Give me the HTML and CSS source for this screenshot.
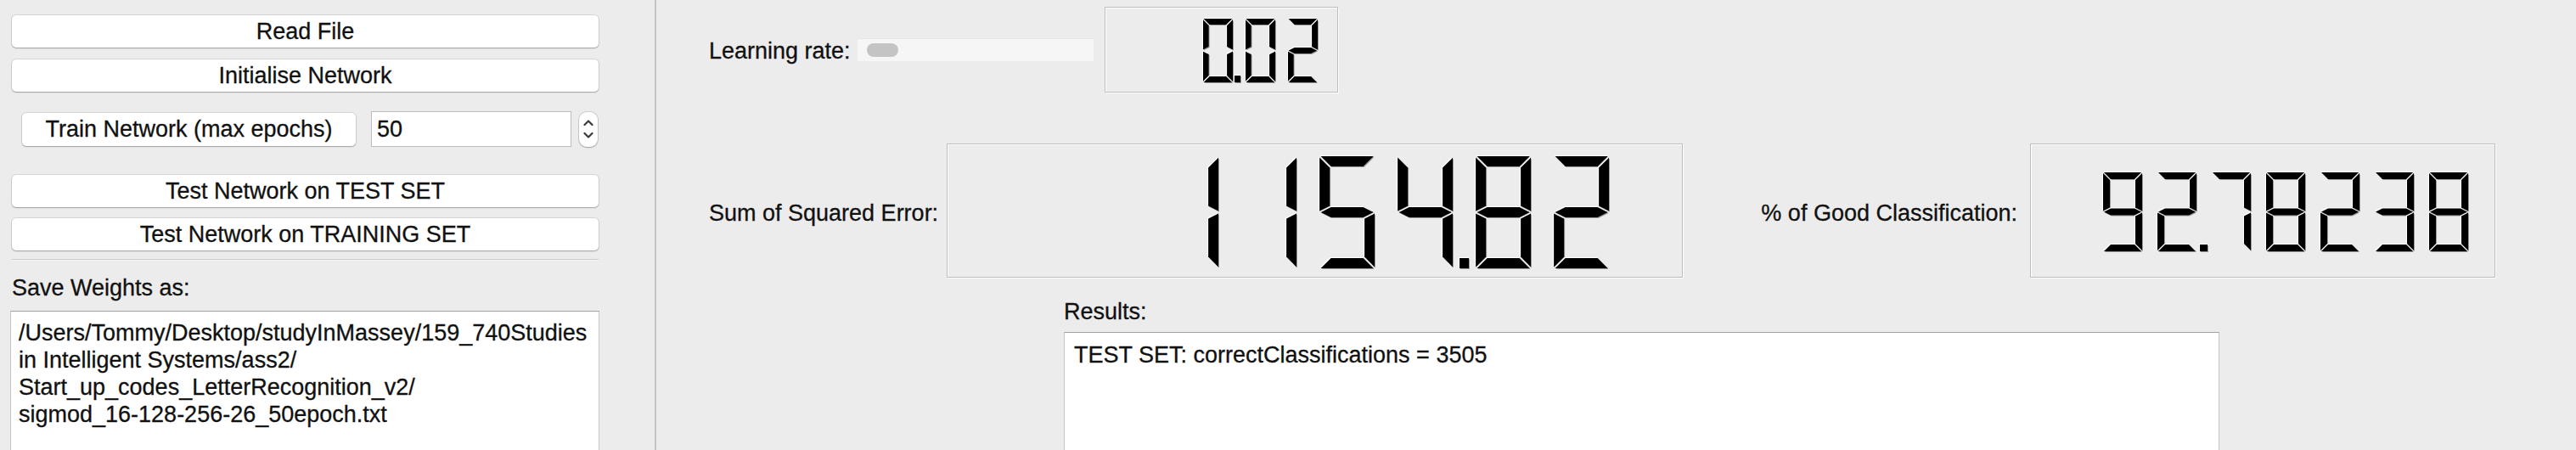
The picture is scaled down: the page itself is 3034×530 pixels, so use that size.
FILE: index.html
```html
<!DOCTYPE html>
<html>
<head>
<meta charset="utf-8">
<title>Neural Network Trainer</title>
<link rel="stylesheet" href="styles.css">
</head>
<body>
<div class="window">
  <aside class="left">
    <button class="btn">Read File</button>
    <button class="btn btn-init">Initialise Network</button>
    <div class="train-row">
      <button class="btn btn-train">Train Network (max epochs)</button>
      <div class="spin-field">50</div>
      <div class="spin-arrows">
        <svg width="12" height="26" viewBox="0 0 12 26"><path d="M1.5 8 L6 3.5 L10.5 8 M1.5 18 L6 22.5 L10.5 18" fill="none" stroke="#3a3a3a" stroke-width="2.2" stroke-linecap="round" stroke-linejoin="round"/></svg>
      </div>
    </div>
    <button class="btn btn-test1">Test Network on TEST SET</button>
    <button class="btn btn-test2">Test Network on TRAINING SET</button>
    <div class="sep"></div>
    <div class="label save-label">Save Weights as:</div>
    <div class="textbox save-box">/Users/Tommy/Desktop/studyInMassey/159_740Studies<br>in Intelligent Systems/ass2/<br>Start_up_codes_LetterRecognition_v2/<br>sigmod_16-128-256-26_50epoch.txt</div>
  </aside>
  <div class="divider"></div>
  <main class="right">
    <div class="row row-lr">
      <span class="label label-lr">Learning rate:</span>
      <div class="slider"><span class="handle"></span></div>
      <div class="lcd lcd-lr">
        <span class="digit"><span class="ch">0</span><i class="s a"></i><i class="s b"></i><i class="s c"></i><i class="s d"></i><i class="s e"></i><i class="s f"></i></span>
        <span class="dot"><span class="ch">.</span></span>
        <span class="digit"><span class="ch">0</span><i class="s a"></i><i class="s b"></i><i class="s c"></i><i class="s d"></i><i class="s e"></i><i class="s f"></i></span>
        <span class="digit"><span class="ch">2</span><i class="s a"></i><i class="s b"></i><i class="s g"></i><i class="s e"></i><i class="s d"></i></span>
      </div>
    </div>

    <div class="row row-err">
      <span class="label label-mid">Sum of Squared Error:</span>
      <div class="lcd lcd-sse">
        <span class="digit"><span class="ch">1</span><i class="s b"></i><i class="s c"></i></span>
        <span class="digit"><span class="ch">1</span><i class="s b"></i><i class="s c"></i></span>
        <span class="digit"><span class="ch">5</span><i class="s a"></i><i class="s f"></i><i class="s g"></i><i class="s c"></i><i class="s d"></i></span>
        <span class="digit"><span class="ch">4</span><i class="s f"></i><i class="s g"></i><i class="s b"></i><i class="s c"></i></span>
        <span class="dot"><span class="ch">.</span></span>
        <span class="digit"><span class="ch">8</span><i class="s a"></i><i class="s b"></i><i class="s c"></i><i class="s d"></i><i class="s e"></i><i class="s f"></i><i class="s g"></i></span>
        <span class="digit"><span class="ch">2</span><i class="s a"></i><i class="s b"></i><i class="s g"></i><i class="s e"></i><i class="s d"></i></span>
      </div>
      <span class="spacer"></span>
      <span class="label label-mid">% of Good Classification:</span>
      <div class="lcd lcd-pct">
        <span class="digit"><span class="ch">9</span><i class="s a"></i><i class="s b"></i><i class="s c"></i><i class="s d"></i><i class="s f"></i><i class="s g"></i></span>
        <span class="digit"><span class="ch">2</span><i class="s a"></i><i class="s b"></i><i class="s g"></i><i class="s e"></i><i class="s d"></i></span>
        <span class="dot"><span class="ch">.</span></span>
        <span class="digit"><span class="ch">7</span><i class="s a"></i><i class="s b"></i><i class="s c"></i></span>
        <span class="digit"><span class="ch">8</span><i class="s a"></i><i class="s b"></i><i class="s c"></i><i class="s d"></i><i class="s e"></i><i class="s f"></i><i class="s g"></i></span>
        <span class="digit"><span class="ch">2</span><i class="s a"></i><i class="s b"></i><i class="s g"></i><i class="s e"></i><i class="s d"></i></span>
        <span class="digit"><span class="ch">3</span><i class="s a"></i><i class="s b"></i><i class="s g"></i><i class="s c"></i><i class="s d"></i></span>
        <span class="digit"><span class="ch">8</span><i class="s a"></i><i class="s b"></i><i class="s c"></i><i class="s d"></i><i class="s e"></i><i class="s f"></i><i class="s g"></i></span>
      </div>
    </div>

    <div class="results">
      <div class="label">Results:</div>
      <div class="textbox results-box">TEST SET: correctClassifications = 3505</div>
    </div>
  </main>
</div>
</body>
</html>
```

FILE: styles.css
```css
* {
  box-sizing: border-box;
  margin: 0;
  padding: 0;
}

html,
body {
  width: 3034px;
  height: 530px;
  overflow: hidden;
}

body {
  background: #ececec;
  font-family: "Liberation Sans", Arial, sans-serif;
  font-size: 27px;
  color: #111;
  -webkit-text-stroke: 0.3px #111;
}

.window {
  display: flex;
  height: 530px;
}

/* ---------- left panel ---------- */
.left {
  width: 771px;
  flex: none;
  padding: 18px 0 0 14px;
  display: flex;
  flex-direction: column;
  align-items: flex-start;
}

.left > * {
  flex: none;
}

.btn {
  font: inherit;
  color: inherit;
  background: #fff;
  border: none;
  border-radius: 5px;
  height: 38px;
  width: 691px;
  line-height: 1;
  display: flex;
  align-items: center;
  justify-content: center;
  box-shadow: 0 0 0 1px rgba(0, 0, 0, 0.09), 0 1px 1.5px rgba(0, 0, 0, 0.25);
}

.btn-init {
  margin-top: 14px;
}

.train-row {
  margin-top: 23px;
  height: 42px;
  padding-left: 12px;
  display: flex;
  align-items: center;
}

.train-row > * {
  flex: none;
}

.btn-train {
  width: 393px;
  height: 39px;
}

.spin-field {
  width: 236px;
  height: 42px;
  margin-left: 18px;
  background: #fff;
  border: 1px solid #bdbdbd;
  padding-left: 6px;
  display: flex;
  align-items: center;
}

.spin-arrows {
  width: 22px;
  height: 41px;
  margin-left: 9px;
  background: #fff;
  border-radius: 9px;
  box-shadow: 0 0 0 1px rgba(0, 0, 0, 0.12), 0 1px 1.5px rgba(0, 0, 0, 0.22);
  display: flex;
  align-items: center;
  justify-content: center;
}

.btn-test1 {
  margin-top: 33px;
}

.btn-test2 {
  margin-top: 13px;
}

.sep {
  margin-top: 10px;
  width: 691px;
  height: 2px;
  border-top: 1px solid #c9c9c9;
  border-bottom: 1px solid #f6f6f6;
}

.label {
  line-height: 32px;
  white-space: nowrap;
}

.save-label {
  margin-top: 16px;
}

.textbox {
  background: #fff;
  border: 1px solid #c6c6c6;
  border-top-color: #a2a2a2;
  line-height: 32px;
  white-space: nowrap;
}

.save-box {
  margin-top: 11px;
  margin-left: -2px;
  width: 694px;
  height: 220px;
  padding: 9px 9px;
}

.divider {
  width: 2px;
  flex: none;
  background: #c3c3c3;
}

/* ---------- right panel ---------- */
.right {
  flex: 1;
  padding: 8px 0 0 62px;
  display: flex;
  flex-direction: column;
  align-items: flex-start;
}

.right > * {
  flex: none;
}

.row {
  display: flex;
  align-items: center;
}

.row > * {
  flex: none;
}

.label-lr {
  margin-top: 3px;
}

.label-mid {
  margin-top: 5px;
}

.slider {
  width: 278px;
  height: 27px;
  margin-left: 8px;
  background: #f6f6f6;
  border-top: 1px solid #e6e6e6;
  padding-left: 11px;
  display: flex;
  align-items: center;
}

.handle {
  width: 37px;
  height: 16px;
  border-radius: 8px;
  background: #c4c4c4;
}

.row-err {
  margin-top: 60px;
  width: 2104px;
}

.row-err > .spacer {
  flex: 1;
}

.results {
  margin-top: 24px;
  margin-left: 418px;
}

.results-box {
  margin-top: 8px;
  width: 1361px;
  height: 200px;
  padding: 10px 11px;
}

/* ---------- LCD numbers ---------- */
.lcd {
  display: flex;
  justify-content: flex-end;
  align-items: center;
  gap: var(--gap);
  border: 1px solid #bdbdbd;
  box-shadow: inset 1px 1px 0 #fff, 1px 1px 0 #fff;
  --g: 1px;
}

.lcd-lr {
  width: 275px;
  height: 101px;
  margin-left: 13px;
  padding: 2px 24px 0 0;
  --w: 34px;
  --h: 75px;
  --t: 7px;
  --gap: 16px;
  --o: 3px;
  --d: 7px;
  --dh: 8px;
}

.lcd-sse {
  width: 867px;
  height: 158px;
  margin-left: 10px;
  padding: 4px 86px 0 0;
  --w: 65px;
  --h: 132px;
  --t: 12px;
  --gap: 27px;
  --o: 8px;
  --d: 11px;
  --dh: 12px;
  --g: 1.5px;
}

.lcd-pct {
  width: 548px;
  height: 158px;
  margin-left: 15px;
  padding: 3px 31px 0 0;
  --w: 46px;
  --h: 93px;
  --t: 8px;
  --gap: 18px;
  --o: 4px;
  --d: 9px;
  --dh: 8px;
}

.digit {
  flex: none;
  width: var(--w);
  height: var(--h);
  display: grid;
  filter: drop-shadow(-1px -1px 0 #fff) drop-shadow(1px 1px 0 #9c9c9c);
}

/* the digit's character, kept as text underneath the drawn segments */
.ch {
  grid-area: 1 / 1;
  font-size: calc(var(--h) * 0.85);
  line-height: var(--h);
  text-align: center;
  color: transparent;
  -webkit-text-stroke: 0;
}

.s {
  grid-area: 1 / 1;
  background: #000;
}

.a {
  clip-path: polygon(var(--g) 0, calc(100% - var(--g)) 0, calc(100% - var(--t) - var(--g)) var(--t), calc(var(--t) + var(--g)) var(--t));
}

.d {
  clip-path: polygon(calc(var(--t) + var(--g)) calc(100% - var(--t)), calc(100% - var(--t) - var(--g)) calc(100% - var(--t)), calc(100% - var(--g)) 100%, var(--g) 100%);
}

.f {
  clip-path: polygon(0 var(--g), var(--t) calc(var(--t) + var(--g)), var(--t) calc(50% - var(--t) / 2 - var(--g)), 0 calc(50% - var(--g)));
}

.e {
  clip-path: polygon(0 calc(50% + var(--g)), var(--t) calc(50% + var(--t) / 2 + var(--g)), var(--t) calc(100% - var(--t) - var(--g)), 0 calc(100% - var(--g)));
}

.b {
  clip-path: polygon(100% var(--g), 100% calc(50% - var(--g)), calc(100% - var(--t)) calc(50% - var(--t) / 2 - var(--g)), calc(100% - var(--t)) calc(var(--t) + var(--g)));
}

.c {
  clip-path: polygon(calc(100% - var(--t)) calc(50% + var(--t) / 2 + var(--g)), 100% calc(50% + var(--g)), 100% calc(100% - var(--g)), calc(100% - var(--t)) calc(100% - var(--t) - var(--g)));
}

.g {
  clip-path: polygon(var(--g) 50%, calc(var(--t) + var(--g)) calc(50% - var(--t) / 2), calc(100% - var(--t) - var(--g)) calc(50% - var(--t) / 2), calc(100% - var(--g)) 50%, calc(100% - var(--t) - var(--g)) calc(50% + var(--t) / 2), calc(var(--t) + var(--g)) calc(50% + var(--t) / 2));
}

.dot {
  flex: none;
  width: var(--d);
  height: var(--h);
  margin-left: calc(var(--o) - var(--gap));
  margin-right: calc(-1 * (var(--o) + var(--d)));
  display: grid;
  filter: drop-shadow(-1px -1px 0 #fff) drop-shadow(1px 1px 0 #9c9c9c);
}

.dot::after {
  content: "";
  grid-area: 1 / 1;
  align-self: end;
  width: var(--d);
  height: var(--dh);
  background: #000;
}

.dot .ch {
  font-size: var(--dh);
  line-height: var(--dh);
  align-self: end;
}
```
